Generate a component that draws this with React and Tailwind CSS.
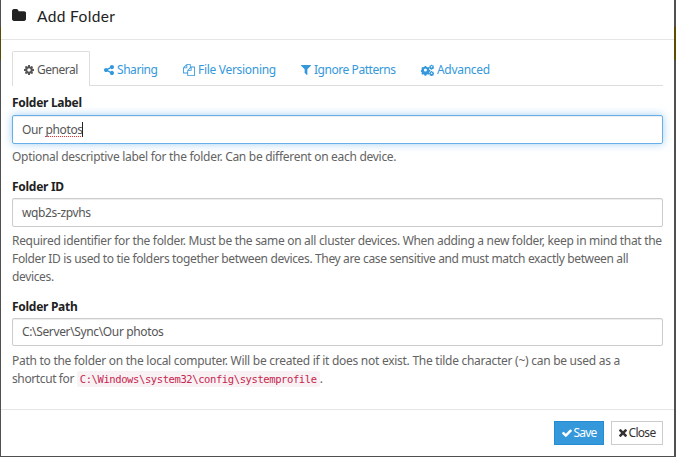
function Glyph({ d, viewBox = "0 0 1792 1792", className }) {
  return (
    <svg viewBox={viewBox} fill="currentColor" className={`shrink-0 ${className}`}>
      <path d={d} />
    </svg>
  );
}

const glyphs = {
  folder:
    "M1728 608v704q0 92-66 158t-158 66h-1216q-92 0-158-66t-66-158v-960q0-92 66-158t158-66h320q92 0 158 66t66 158v32h672q92 0 158 66t66 158z",
  cog: "M1152 896q0-106-75-181t-181-75-181 75-75 181 75 181 181 75 181-75 75-181zm512-109v222q0 12-8 23t-20 13l-185 28q-19 54-39 91 35 50 107 138 10 12 10 25t-9 23q-27 37-99 108t-94 71q-12 0-26-9l-138-108q-44 23-91 38-16 136-29 186-7 28-36 28h-222q-14 0-24.500-8.500t-11.500-21.500l-28-184q-49-16-90-37l-141 107q-10 9-25 9-14 0-25-11-126-114-165-168-7-10-7-23 0-12 8-23 15-21 51-66.500t54-70.500q-27-50-41-99l-183-27q-13-2-21-12.500t-8-23.500v-222q0-12 8-23t19-13l186-28q14-46 39-92-40-57-107-138-10-12-10-24 0-10 9-23 26-36 98.500-107.500t94.500-71.500q13 0 26 10l138 107q44-23 91-38 16-136 29-186 7-28 36-28h222q14 0 24.500 8.500t11.500 21.500l28 184q49 16 90 37l142-107q9-9 24-9 13 0 25 10 129 119 165 170 7 8 7 22 0 12-8 23-15 21-51 66.500t-54 70.500q26 50 41 98l183 28q13 2 21 12.500t8 23.500z",
  share:
    "M1344 1024q133 0 226.500 93.500t93.500 226.500-93.500 226.500-226.500 93.500-226.500-93.500-93.500-226.500q0-12 2-34l-360-180q-92 86-218 86-133 0-226.500-93.500t-93.500-226.500 93.500-226.500 226.500-93.500q126 0 218 86l360-180q-2-22-2-34 0-133 93.500-226.500t226.500-93.500 226.500 93.500 93.500 226.500-93.500 226.500-226.500 93.500q-126 0-218-86l-360 180q2 22 2 34t-2 34l360 180q92-86 218-86z",
  files:
    "M1696 384q40 0 68 28t28 68v1216q0 40-28 68t-68 28h-960q-40 0-68-28t-28-68v-288h-544q-40 0-68-28t-28-68v-672q0-40 20-88t48-76l408-408q28-28 76-48t88-20h416q40 0 68 28t28 68v328q68-40 128-40h416zm-544 213l-299 299h299v-299zm-640-384l-299 299h299v-299zm196 647l316-316v-416h-384v416q0 40-28 68t-68 28h-416v640h512v-256q0-40 20-88t48-76zm956 804v-1152h-384v416q0 40-28 68t-68 28h-416v640h896z",
  filter:
    "M1595 295q17 41-14 70l-493 493v742q0 42-39 59-13 5-25 5-27 0-45-19l-256-256q-19-19-19-45v-486l-493-493q-31-29-14-70 17-39 59-39h1280q42 0 59 39z",
  check:
    "M1671 566q0 40-28 68l-724 724-136 136q-28 28-68 28t-68-28l-136-136-362-362q-28-28-28-68t28-68l136-136q28-28 68-28t68 28l294 295 656-657q28-28 68-28t68 28l136 136q28 28 28 68z",
  times:
    "M1490 1322q0 40-28 68l-136 136q-28 28-68 28t-68-28l-294-294-294 294q-28 28-68 28t-68-28l-136-136q-28-28-28-68t28-68l294-294-294-294q-28-28-28-68t28-68l136-136q28-28 68-28t68 28l294 294 294-294q28-28 68-28t68 28l136 136q28 28 28 68t-28 68l-294 294 294 294q28 28 28 68z",
};

const gear = "M-1-5h2l.4 1.3 1 .4 1.200-.6 1.400 1.400-.6 1.200.4 1 1.300.3v2l-1.300.4-.4 1 .6 1.200-1.400 1.400-1.200-.6-1 .4-.4 1.300h-2l-.4-1.300-1-.4-1.200.6-1.400-1.400.6-1.200-.4-1-1.300-.4v-2l1.300-.3.4-1-.6-1.200 1.400-1.400 1.200.6 1-.4zM0-1.800a1.900 1.900 0 1 0 0 3.800a1.900 1.900 0 1 0 0-3.800z";

function Cogs() {
  return (
    <svg viewBox="0 0 13 12" fill="currentColor" fillRule="evenodd" className="h-3 w-[13px] shrink-0">
      <path d={gear} transform="translate(4.400 6) scale(.8)" />
      <path d={gear} transform="translate(10.600 2.800) scale(.42)" />
      <path d={gear} transform="translate(10.600 9.200) scale(.42)" />
    </svg>
  );
}

const tabs = [
  { label: "Sharing", icon: <Glyph d={glyphs.share} viewBox="128 128 1536 1536" className="h-[10px] w-[10px]" />, width: "w-[79px]", text: "tracking-[-0.45px]" },
  { label: "File Versioning", icon: <Glyph d={glyphs.files} className="h-[12px] w-[12px]" />, width: "w-[118px]", text: "tracking-[-0.3px]" },
  { label: "Ignore Patterns", icon: <Glyph d={glyphs.filter} viewBox="192 256 1408 1408" className="h-[10px] w-[10px]" />, width: "w-[120px]", text: "tracking-[-0.45px]" },
  { label: "Advanced", icon: <Cogs />, width: "w-[100px]", text: "tracking-[-0.3px]" },
];

function Edge({ className }) {
  return (
    <div className={`flex shrink-0 flex-col bg-[#505052] ${className}`}>
      <div className="mt-[27px] h-[33px] bg-[#5c4b00]" />
    </div>
  );
}

function Field({ label, children, focused, labelGap = "mb-[2px]", height = "h-[29px]", helpGap = "mt-[5px]", help }) {
  return (
    <div className="mb-3">
      <div className={`h-[18px] font-bold leading-[18px] tracking-[-0.28px] text-[#222] ${labelGap}`}>{label}</div>
      <div
        className={`flex items-center rounded-[2px] border px-[9px] tracking-[-0.36px] text-[#555] ${height} ${
          focused
            ? "border-[#66afe9] shadow-[inset_0_1px_1px_rgba(0,0,0,0.075),0_0_8px_rgba(102,175,233,0.6)]"
            : "border-[#ccc] shadow-[inset_0_1px_1px_rgba(0,0,0,0.075)]"
        }`}
      >
        {children}
      </div>
      <div className={`text-[#636363] ${helpGap}`}>{help}</div>
    </div>
  );
}

function Line({ className, children }) {
  return <p className={`h-[18px] whitespace-nowrap leading-[18px] ${className}`}>{children}</p>;
}

export default function App() {
  return (
    <div className="flex h-[457px] w-[676px] overflow-hidden bg-[#505052] font-['Noto_Sans',sans-serif] text-[12px]">
      <Edge className="w-px" />
      <main className="flex h-[456px] w-[673px] shrink-0 flex-col bg-white">
        <header className="flex h-10 shrink-0 items-start border-b border-[#e5e5e5] pl-[11px]">
          <Glyph d={glyphs.folder} viewBox="64 128 1664 1408" className="mt-[9px] h-[12px] w-[14px] text-[#222]" />
          <h1 className="ml-[11px] mt-[4px] whitespace-nowrap font-['Lato',sans-serif] text-[15.5px] leading-[24px] tracking-[0.35px] text-[#222]">
            Add Folder
          </h1>
        </header>
        <section className="px-[11px] pt-[11px]">
          <nav className="flex h-[35px] border-b border-[#ddd]">
            <div className="flex h-[35px] w-[78px] shrink-0 items-center gap-[3px] rounded-t-[2px] border border-b-0 border-[#ddd] bg-white pl-[11px] pt-[2px] text-[#555]">
              <Glyph d={glyphs.cog} viewBox="128 128 1536 1536" className="h-[10px] w-[10px]" />
              <span className="tracking-[-0.5px]">General</span>
            </div>
            <div className="flex h-[35px] items-center pl-[14px] pt-[3px] text-[#3498db]">
              {tabs.map(({ label, icon, width, text }) => (
                <div key={label} className={`flex shrink-0 items-center gap-[3px] whitespace-nowrap ${width}`}>
                  {icon}
                  <span className={text}>{label}</span>
                </div>
              ))}
            </div>
          </nav>
          <div className="pt-2">
            <Field
              label="Folder Label"
              focused
              labelGap="mb-[3px]"
              helpGap="mt-1"
              help={
                <Line className="tracking-[-0.29px]">
                  Optional descriptive label for the folder. Can be different on each device.
                </Line>
              }
            >
              <span>
                Our{" "}
                <span className="inline-block border-b border-dotted border-[#f03030] leading-[13px]">photos</span>
              </span>
              <span className="-ml-px h-[15px] w-px bg-[#222]" />
            </Field>
            <Field
              label="Folder ID"
              help={
                <>
                  <Line className="tracking-[-0.305px]">
                    Required identifier for the folder. Must be the same on all cluster devices. When adding a new folder, keep in mind that the
                  </Line>
                  <Line className="tracking-[-0.35px]">
                    Folder ID is used to tie folders together between devices. They are case sensitive and must match exactly between all
                  </Line>
                  <Line className="tracking-[-0.35px]">devices.</Line>
                </>
              }
            >
              wqb2s-zpvhs
            </Field>
            <Field
              label="Folder Path"
              height="h-[28px]"
              helpGap="mt-[6px]"
              help={
                <>
                  <Line className="tracking-[-0.27px]">
                    Path to the folder on the local computer. Will be created if it does not exist. The tilde character (~) can be used as a
                  </Line>
                  <Line className="tracking-[-0.39px]">
                    shortcut for{" "}
                    <code className="rounded-[2px] bg-[#f9f2f4] px-[3px] py-[2px] font-['DejaVu_Sans_Mono',monospace] text-[10.5px] tracking-[-0.4px] text-[#c7254e]">
                      C:\Windows\system32\config\systemprofile
                    </code>
                    .
                  </Line>
                </>
              }
            >
              C:\Server\Sync\Our photos
            </Field>
          </div>
        </section>
        <footer className="mt-auto flex h-[47px] shrink-0 items-start justify-end gap-[7px] border-t border-[#e5e5e5] pr-[11px] pt-[11px]">
          <button className="flex h-6 w-[50px] items-center justify-center gap-[2px] border border-[#258cd1] bg-[#3498db] text-white">
            <Glyph d={glyphs.check} viewBox="121 270 1550 1252" className="h-[8px] w-[10px]" />
            <span className="tracking-[-0.8px]">Save</span>
          </button>
          <button className="flex h-6 w-[52px] items-center justify-center gap-[2px] border border-[#ccc] bg-white text-[#333]">
            <Glyph d={glyphs.times} viewBox="302 366 1188 1188" className="h-[8px] w-[8px]" />
            <span className="tracking-[-0.7px]">Close</span>
          </button>
        </footer>
      </main>
      <Edge className="w-[2px]" />
    </div>
  );
}
